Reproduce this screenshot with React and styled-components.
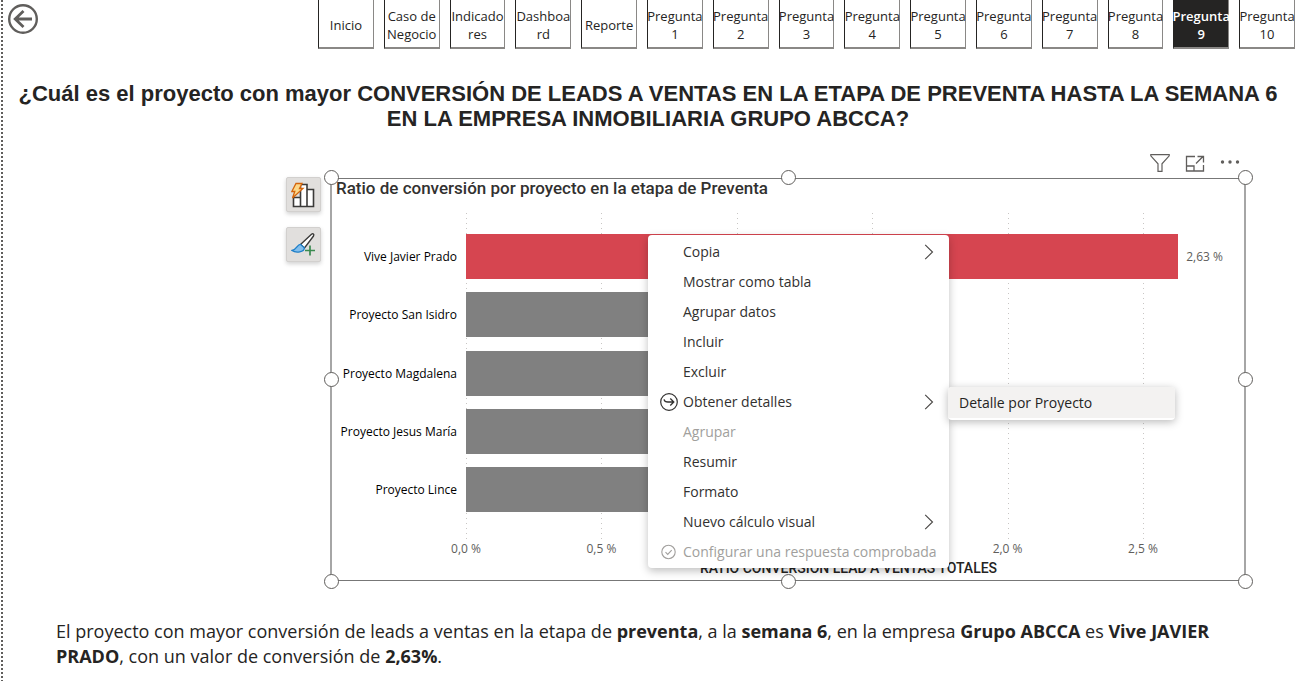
import React from "react";
import styled, { createGlobalStyle } from "styled-components";

const Global = createGlobalStyle`
  * { box-sizing: border-box; }
  body { margin: 0; background: #fff; color: #252423; font-family: "Open Sans", "Noto Sans", sans-serif; }
  button { font: inherit; color: inherit; background: none; border: 0; padding: 0; cursor: pointer; }
`;

const Page = styled.div`
  position: relative;
  min-height: 100vh;
  overflow: hidden;

  &::before {
    content: "";
    position: absolute;
    left: 1px;
    top: 0;
    bottom: 0;
    width: 2px;
    background: repeating-linear-gradient(#605e5c 0 2px, transparent 2px 4px);
  }
`;

const TopBar = styled.header`
  display: flex;
  justify-content: space-between;
  align-items: flex-start;
  padding: 0 3px 0 8px;
`;

const BackButton = styled.button`
  flex: none;
  width: 30px;
  height: 30px;
  margin-top: 4px;
  svg { display: block; }
`;

const Tabs = styled.nav`
  display: flex;
  flex: 1;
  gap: 10px;
  margin-left: 280px;
`;

const Tab = styled.button`
  flex: 1 1 0;
  min-width: 0;
  height: 49px;
  padding-top: 2px;
  display: flex;
  align-items: center;
  justify-content: center;
  white-space: pre;
  text-align: center;
  font-size: 13px;
  line-height: 18px;
  font-weight: ${(p) => (p.$active ? 600 : 400)};
  color: ${(p) => (p.$active ? "#fff" : "#252423")};
  background: ${(p) => (p.$active ? "#252423" : "#fff")};
  border: solid #8a8886;
  border-width: 0 1px 2px 1px;
  border-left-color: #252423;
`;

const Heading = styled.h1`
  margin: 32px 14px 0 12px;
  font-family: "Liberation Sans", Arial, sans-serif;
  font-size: 22px;
  line-height: 25px;
  font-weight: 700;
  text-align: center;
`;

const VisualActions = styled.div`
  display: flex;
  justify-content: flex-end;
  align-items: center;
  gap: 15px;
  height: 22px;
  margin: 21px 58px 0 0;
  button { display: block; height: 22px; }
  svg { display: block; }
`;

const ChartRow = styled.section`
  display: flex;
  gap: 9px;
  margin: 3px 52px 0 286px;
`;

const SideTools = styled.div`
  display: flex;
  flex-direction: column;
  gap: 15px;
`;

const SideButton = styled.button`
  display: grid;
  place-items: center;
  width: 35px;
  height: 35px;
  background: #e1dfdd;
  border: 1px solid #d2d0ce;
  border-radius: 2px;
  box-shadow: 0 2px 4px rgba(0, 0, 0, 0.18);
`;

const Frame = styled.div`
  position: relative;
  flex: 1;
  min-width: 0;
  margin-top: 1px;
  padding: 0 13px 3px 4px;
  border: solid #a6a6a6;
  border-width: 1px 2px;
  border-top-color: #777;
  border-bottom-color: #777;
`;

const Handles = styled.div`
  position: absolute;
  inset: -1px -2px -2px 0;
  pointer-events: none;
`;

const Handle = styled.span`
  position: absolute;
  left: ${(p) => p.$x};
  top: ${(p) => p.$y};
  width: 15px;
  height: 15px;
  margin: -8px 0 0 -8px;
  border: 1px solid #605e5c;
  border-radius: 50%;
  background: #fff;
`;

const ChartTitle = styled.h2`
  margin: 0;
  font-family: Roboto, sans-serif;
  font-size: 17px;
  line-height: 18px;
  font-weight: 500;
  color: #323130;
`;

const Chart = styled.div`
  display: flex;
  gap: 9px;
  margin-top: 16px;
`;

const Categories = styled.div`
  display: flex;
  flex-direction: column;
  justify-content: space-between;
  flex: none;
  width: 121px;
  height: 278px;
  margin-top: 21px;
`;

const Category = styled.div`
  height: 45px;
  line-height: 45px;
  font-size: 12px;
  color: #000;
  text-align: right;
  white-space: nowrap;
`;

const Plot = styled.div`
  flex: 1;
  min-width: 0;
`;

const Canvas = styled.div`
  position: relative;
  padding: 21px 0 29px;
`;

const GridLine = styled.span`
  position: absolute;
  top: 0;
  bottom: 0;
  width: 1px;
  background: repeating-linear-gradient(#c8c6c4 0 1px, transparent 1px 5px);
`;

const Bars = styled.div`
  position: relative;
  display: flex;
  flex-direction: column;
  justify-content: space-between;
  height: 278px;
`;

const BarRow = styled.div`
  display: flex;
  align-items: center;
  gap: 8px;
  height: 45px;
  font-size: 12px;
  color: #605e5c;
  white-space: nowrap;
`;

const Bar = styled.div`
  flex: none;
  height: 45px;
  background: ${(p) => (p.$highlight ? "#d64550" : "#808080")};
`;

const Axis = styled.div`
  position: relative;
  height: 18px;
  font-size: 12px;
  line-height: 16px;
  color: #605e5c;
`;

const Tick = styled.span`
  position: absolute;
  top: 0;
  transform: translateX(-50%);
  white-space: nowrap;
`;

const AxisTitle = styled.div`
  font-family: Roboto, sans-serif;
  font-size: 14px;
  line-height: 18px;
  font-weight: 500;
  text-align: center;
`;

const Menu = styled.ul`
  position: absolute;
  left: 316px;
  top: 56px;
  width: 301px;
  margin: 0;
  padding: 2px 0 1px;
  list-style: none;
  background: #fff;
  border-radius: 4px;
  box-shadow: 0 3px 9px rgba(0, 0, 0, 0.25);
`;

const MenuRow = styled.li`
  position: relative;
`;

const MenuItem = styled.button`
  display: grid;
  grid-template-columns: 17px 1fr 10px;
  align-items: center;
  column-gap: 6px;
  width: 100%;
  height: 30px;
  padding: 0 15px 0 12px;
  font-size: 14px;
  line-height: 20px;
  text-align: left;
  white-space: nowrap;
  color: ${(p) => (p.disabled ? "#a19f9d" : "#323130")};
  svg { display: block; }
`;

const SubMenu = styled.div`
  position: absolute;
  left: 300px;
  top: 0;
  width: 227px;
  padding-bottom: 2px;
  background: #fff;
  border-radius: 4px;
  box-shadow: 0 2px 8px rgba(0, 0, 0, 0.28);
  overflow: hidden;
`;

const SubItem = styled.button`
  display: block;
  width: 100%;
  height: 31px;
  padding-left: 11px;
  font-size: 14px;
  text-align: left;
  color: #252423;
  background: #f3f2f1;
`;

const Summary = styled.p`
  margin: 38px 56px 0;
  font-size: 18px;
  line-height: 25px;
`;

const tabs = [
  "Inicio", "Caso de\nNegocio", "Indicado\nres", "Dashboa\nrd", "Reporte",
  ...Array.from({ length: 10 }, (_, i) => `Pregunta\n${i + 1}`),
];

const DOMAIN = 2.825;
const pct = (v) => `${(v / DOMAIN) * 100}%`;
const projects = [
  { name: "Vive Javier Prado", value: 2.63, label: "2,63 %" },
  { name: "Proyecto San Isidro", value: 1.6 },
  { name: "Proyecto Magdalena", value: 1.4 },
  { name: "Proyecto Jesus María", value: 1.2 },
  { name: "Proyecto Lince", value: 1.0 },
];
const ticks = [
  { at: 0, label: "0,0 %" },
  { at: 0.5, label: "0,5 %" },
  { at: 1 },
  { at: 1.5 },
  { at: 2, label: "2,0 %" },
  { at: 2.5, label: "2,5 %" },
];
const handles = [
  ["0%", "0%"], ["50%", "0%"], ["100%", "0%"], ["0%", "50%"],
  ["100%", "50%"], ["0%", "100%"], ["50%", "100%"], ["100%", "100%"],
];

const menu = [
  { text: "Copia", more: true },
  { text: "Mostrar como tabla" },
  { text: "Agrupar datos" },
  { text: "Incluir" },
  { text: "Excluir" },
  { text: "Obtener detalles", more: true, icon: "drill", sub: "Detalle por Proyecto" },
  { text: "Agrupar", disabled: true },
  { text: "Resumir" },
  { text: "Formato" },
  { text: "Nuevo cálculo visual", more: true },
  { text: "Configurar una respuesta comprobada", disabled: true, icon: "check" },
];

const BackIcon = () => (
  <svg width="30" height="30" viewBox="0 0 30 30" fill="none" stroke="#605e5c">
    <circle cx="15" cy="15" r="13.8" strokeWidth="2.4" />
    <path d="M24 15H7M15.5 7L7.2 15l8.3 8" strokeWidth="2.8" />
  </svg>
);
const FilterIcon = () => (
  <svg width="20" height="22" viewBox="0 0 20 22" fill="none" stroke="#605e5c" strokeWidth="1.2">
    <path d="M.8 2.6h18.4v1.2L12 11.8v7.6H8v-7.6L.8 3.8z" />
  </svg>
);
const FocusIcon = () => (
  <svg width="20" height="22" viewBox="0 0 20 22" fill="none" stroke="#605e5c" strokeWidth="1.3">
    <path d="M10 4.500H1.500v14.500h17v-6M1.500 14h7.500v5M11 11.500l7-7M12.500 4.500h6v6" />
  </svg>
);
const DotsIcon = () => (
  <svg width="20" height="22" viewBox="0 0 20 22" fill="#605e5c">
    <circle cx="2.500" cy="10" r="1.700" /><circle cx="10" cy="10" r="1.700" /><circle cx="17.500" cy="10" r="1.700" />
  </svg>
);
const ChartBoltIcon = () => (
  <svg width="26" height="26" viewBox="0 0 26 26" fill="#fff" stroke="#3b3a39" strokeWidth="1.6">
    <path d="M2.500 15.500h7v9h-7zM9.500 2.500h6.500v22H9.500zM16 7.500h6.500v17H16z" />
    <path d="M5 1.500h6L8.500 6.500h3.500L1.500 16l2.300-6.500H.8z" fill="#fcd88a" stroke="#d4640c" strokeWidth="1.300" />
  </svg>
);
const BrushIcon = () => (
  <svg width="26" height="26" viewBox="0 0 26 26" fill="none">
    <path d="M9.500 12.500L20.500 2.200c1.500-1.200 3 .2 2 1.800L13.500 16z" fill="#fff" stroke="#3b3a39" strokeWidth="1.400" />
    <path d="M9.500 12.300c-3.500 0-3.500 5-8.500 6.200 4 2.800 12.500 1.700 12.300-2.700z" fill="#83beec" stroke="#1e7fc8" strokeWidth="1.300" />
    <path d="M19 13.500v10M14 18.500h10" stroke="#3a8a50" strokeWidth="1.700" />
  </svg>
);
const Chevron = () => (
  <svg width="10" height="16" viewBox="0 0 10 16" fill="none" stroke="#484644" strokeWidth="1.1">
    <path d="M1.200 .8L8.500 8l-7.300 7.200" />
  </svg>
);
const DrillIcon = () => (
  <svg width="18" height="18" viewBox="0 0 18 18" fill="none" stroke="#323130" strokeWidth="1.200">
    <circle cx="9" cy="9" r="8.300" />
    <path d="M4 6.300C4.500 8.500 6 9 8 9h5.500M10.300 5.500L13.800 9l-3.500 3.500" strokeWidth="1.300" />
  </svg>
);
const CheckIcon = () => (
  <svg width="17" height="16" viewBox="0 0 17 16" fill="none" stroke="#a19f9d" strokeWidth="1.100">
    <circle cx="8.500" cy="8" r="6.700" />
    <path d="M5.500 8.200l2.200 2.200 4-4.300" />
  </svg>
);

const icons = { drill: <DrillIcon />, check: <CheckIcon /> };

export default function App() {
  return (
    <Page>
      <Global />
      <TopBar>
        <BackButton aria-label="Atrás"><BackIcon /></BackButton>
        <Tabs>
          {tabs.map((t) => (
            <Tab key={t} $active={t === "Pregunta\n9"}>{t}</Tab>
          ))}
        </Tabs>
      </TopBar>

      <Heading>
        ¿Cuál es el proyecto con mayor CONVERSIÓN DE LEADS A VENTAS EN LA ETAPA DE PREVENTA HASTA LA
        SEMANA 6 EN LA EMPRESA INMOBILIARIA GRUPO ABCCA?
      </Heading>

      <VisualActions>
        <button aria-label="Filtros"><FilterIcon /></button>
        <button aria-label="Modo de enfoque"><FocusIcon /></button>
        <button aria-label="Más opciones"><DotsIcon /></button>
      </VisualActions>

      <ChartRow>
        <SideTools>
          <SideButton aria-label="Crear visual"><ChartBoltIcon /></SideButton>
          <SideButton aria-label="Dar formato"><BrushIcon /></SideButton>
        </SideTools>
        <Frame>
          <ChartTitle>Ratio de conversión por proyecto en la etapa de Preventa</ChartTitle>
          <Chart>
            <Categories>
              {projects.map((p) => <Category key={p.name}>{p.name}</Category>)}
            </Categories>
            <Plot>
              <Canvas>
                {ticks.map((t) => <GridLine key={t.at} style={{ left: pct(t.at) }} />)}
                <Bars>
                  {projects.map((p, i) => (
                    <BarRow key={p.name}>
                      <Bar $highlight={i === 0} style={{ width: pct(p.value) }} />
                      {p.label}
                    </BarRow>
                  ))}
                </Bars>
              </Canvas>
              <Axis>
                {ticks.filter((t) => t.label).map((t) => (
                  <Tick key={t.at} style={{ left: pct(t.at) }}>{t.label}</Tick>
                ))}
              </Axis>
              <AxisTitle>RATIO CONVERSIÓN LEAD A VENTAS TOTALES</AxisTitle>
            </Plot>
          </Chart>
          <Handles>
            {handles.map(([x, y]) => <Handle key={x + y} $x={x} $y={y} />)}
          </Handles>
          <Menu>
            {menu.map((m) => (
              <MenuRow key={m.text}>
                <MenuItem disabled={m.disabled}>
                  <span>{icons[m.icon]}</span>
                  <span>{m.text}</span>
                  {m.more && <Chevron />}
                </MenuItem>
                {m.sub && <SubMenu><SubItem>{m.sub}</SubItem></SubMenu>}
              </MenuRow>
            ))}
          </Menu>
        </Frame>
      </ChartRow>

      <Summary>
        El proyecto con mayor conversión de leads a ventas en la etapa de <b>preventa</b>, a la{" "}
        <b>semana 6</b>, en la empresa <b>Grupo ABCCA</b> es <b>Vive JAVIER PRADO</b>, con un valor
        de conversión de <b>2,63%</b>.
      </Summary>
    </Page>
  );
}
